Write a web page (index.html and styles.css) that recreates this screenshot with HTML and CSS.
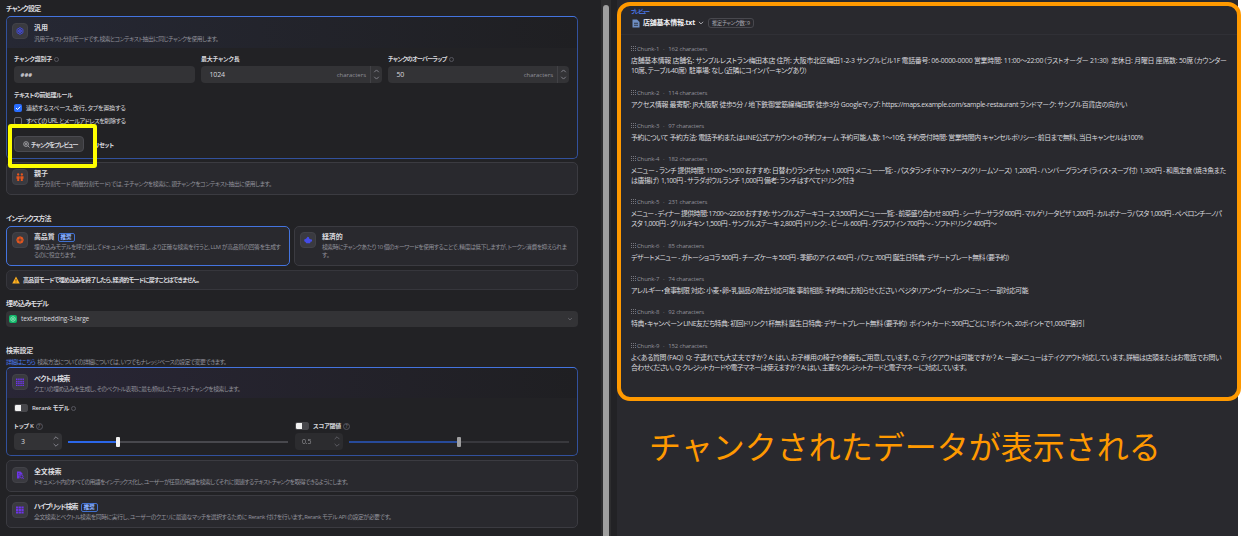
FILE: index.html
```html
<!DOCTYPE html>
<html lang="ja">
<head>
    <meta charset="UTF-8">
    <title>チャンク設定</title>
    <link rel="stylesheet" href="styles.css">
</head>
<body>
    <div class="app">
        <main class="settings">
            <h2 class="t77">チャンク設定</h2>
            <section class="card card-general active">
                <div class="card-head gradient-blue">
                    <div class="icon"><svg viewBox="0 0 16 16" fill="none" stroke="#444ce7" stroke-width="1.8"><path d="M8 1.2l5.900 3.400v6.800L8 14.800l-5.900-3.400V4.600z"/><circle cx="8" cy="8" r="3"/><path d="M8 5v6M5.400 6.500l5.200 3M10.600 6.500l-5.200 3" stroke-width="1"/></svg></div>
                    <div class="card-text">
                        <h3>汎用</h3>
                        <p class="t48">汎用テキスト分割モードです。検索とコンテキスト抽出に同じチャンクを使用します。</p>
                    </div>
                </div>
                <div class="fields">
                    <div class="field">
                        <label><span class="t21">チャンク識別子</span><i class="help"></i></label>
                        <div class="input"><b class="small">###</b></div>
                    </div>
                    <div class="field">
                        <label><span class="t14">最大チャンク長</span></label>
                        <div class="input"><span class="t14">1024</span><em>characters</em><svg class="stepper" viewBox="0 0 12 18"><path d="M3.5 6.500L6 4 8.500 6.500M3.500 11.500L6 14 8.500 11.500"/></svg></div>
                    </div>
                    <div class="field">
                        <label><span class="t68">チャンクのオーバーラップ</span><i class="help"></i></label>
                        <div class="input"><span class="t21">50</span><em>characters</em><svg class="stepper" viewBox="0 0 12 18"><path d="M3.5 6.500L6 4 8.500 6.500M3.500 11.500L6 14 8.500 11.500"/></svg></div>
                    </div>
                </div>
                <div class="rules">
                    <label><span class="t41">テキストの前処理ルール</span></label>
                    <div class="check"><i class="box checked"><svg viewBox="0 0 8 8"><path d="M2 4l1.5 1.5L6.200 2.700"/></svg></i><span class="t28">連続するスペース、改行、タブを置換する</span></div>
                    <div class="check"><i class="box"></i><span class="t53">すべての URL とメールアドレスを削除する</span></div>
                </div>
                <div class="actions">
                    <button class="preview-button"><svg viewBox="0 0 16 16"><circle cx="7" cy="7" r="5.5"/><circle cx="7" cy="7" r="2"/><path d="M11 11l4 4"/></svg><span class="t83">チャンクをプレビュー</span></button>
                    <button class="reset-button"><span class="t25">リセット</span></button>
                    <div class="marker"></div>
                </div>
            </section>
            <section class="card card-parent">
                <div class="card-head">
                    <div class="icon"><svg viewBox="0 0 16 16" fill="#e6561e"><circle cx="4.300" cy="3" r="2.300"/><circle cx="11.700" cy="3" r="2.300"/><path d="M1 6.500h6.300v5H6.300V16H2.500v-4.500H1zM8.700 6.500H15v5h-1.500V16H9.700v-4.500h-1z"/></svg></div>
                    <div class="card-text">
                        <h3>親子</h3>
                        <p class="t41">親子分割モード (階層分割モード) では、子チャンクを検索に、親チャンクをコンテキスト抽出に使用します。</p>
                    </div>
                </div>
            </section>

            <h2 class="index-title t91">インデックス方法</h2>
            <div class="methods">
                <section class="card active">
                    <div class="card-head">
                        <div class="icon"><svg viewBox="0 0 16 16" fill="#e6561e"><path d="M8 .5l5.300 2.200L15.500 8l-2.200 5.300L8 15.500l-5.300-2.200L.5 8l2.200-5.300z"/><path d="M8 3v3M8 10v3M3 8h3M10 8h3" stroke="#3a3a40" stroke-width="1.3"/><circle cx="8" cy="8" r="1.800" fill="#3a3a40"/></svg></div>
                        <div class="card-text">
                            <h3><span class="t14">高品質</span><b class="badge">推奨</b></h3>
                            <p><span class="t34">埋め込みモデルを呼び出してドキュメントを処理し、より正確な検索を行うと、LLM が高品質の回答を生成す</span><br><span class="t45">るのに役立ちます。</span></p>
                        </div>
                    </div>
                </section>
                <section class="card">
                    <div class="card-head">
                        <div class="icon"><svg viewBox="0 0 16 16" fill="#444ce7"><path d="M5 4.500L7 1.500l3 1V5c2 .5 3 1 3.500 2H16v4h-2.500L12 14.500H4.500L3 12 .5 10.500V7L3 6z"/></svg></div>
                        <div class="card-text">
                            <h3><span class="t14">経済的</span></h3>
                            <p><span class="t48">検索時にチャンクあたり 10 個のキーワードを使用することで、精度は低下しますが、トークン消費を抑えられま</span><br>す。</p>
                        </div>
                    </div>
                </section>
            </div>
            <div class="warning"><svg viewBox="0 0 16 16"><path d="M8 1l7.500 14H.5z" fill="#fdb022"/><path d="M8 6v4.500M8 11.500V13" stroke="#5b3a05" stroke-width="1.5"/></svg><span class="t64">高品質モードで埋め込みを終了したら、経済的モードに戻すことはできません。</span></div>

            <h2 class="model-title t83">埋め込みモデル</h2>
            <div class="select"><svg class="model-logo" viewBox="0 0 16 16"><rect width="16" height="16" rx="4" fill="#12b76a"/><path d="M8 3l4.300 2.500v5L8 13l-4.300-2.500v-5zM8 6l2 1v2l-2 1-2-1V7z" fill="none" stroke="#d1fadf" stroke-width="1.1"/></svg><span class="model-name t14">text-embedding-3-large</span><svg class="chevron" viewBox="0 0 10 10"><path d="M2 3.500l3 3 3-3"/></svg></div>

            <h2 class="search-title t25">検索設定</h2>
            <p class="hint"><a href="#" class="t57">詳細はこちら</a><span class="t51">検索方法についての詳細については、いつでもナレッジベースの設定で変更できます。</span></p>
            <section class="card card-vector active">
                <div class="card-head gradient-purple">
                    <div class="icon"><svg viewBox="0 0 16 16" fill="none" stroke="#6d34e8" stroke-width="3" stroke-dasharray="3 1.300"><path d="M0 2.500h16M0 6.800h16M0 11.100h16M0 15.400h16"/></svg></div>
                    <div class="card-text">
                        <h3 class="t73">ベクトル検索</h3>
                        <p class="t48">クエリの埋め込みを生成し、そのベクトル表現に最も類似したテキストチャンクを検索します。</p>
                    </div>
                </div>
                <div class="rerank"><i class="toggle"></i><span class="t21">Rerank モデル</span><i class="help"></i></div>
                <div class="params">
                    <div class="param">
                        <div class="param-label"><span class="t28">トップ K</span><i class="help big">?</i></div>
                        <div class="param-row">
                            <div class="input number"><span>3</span><svg class="stepper" viewBox="0 0 12 18"><path d="M3.5 6.500L6 4 8.500 6.500M3.500 11.500L6 14 8.500 11.500"/></svg></div>
                            <div class="slider"><div class="fill" style="width: 21.8%"></div><div class="handle"></div></div>
                        </div>
                    </div>
                    <div class="param disabled">
                        <div class="param-label"><i class="toggle"></i><span class="t21">スコア閾値</span><i class="help big">?</i></div>
                        <div class="param-row">
                            <div class="input number"><span class="t21">0.5</span><svg class="stepper" viewBox="0 0 12 18"><path d="M3.5 6.500L6 4 8.500 6.500M3.500 11.500L6 14 8.500 11.500"/></svg></div>
                            <div class="slider"><div class="fill" style="width: 49%"></div><div class="handle"></div></div>
                        </div>
                    </div>
                </div>
            </section>
            <section class="card card-search">
                <div class="card-head">
                    <div class="icon"><svg viewBox="0 0 16 16" fill="#6d34e8"><path d="M2 1h7l4 4v2H9.500L7 9.500V15H2z"/><circle cx="11" cy="11" r="3" fill="none" stroke="#6d34e8" stroke-width="1.8"/><path d="M12.500 13L15.500 16" stroke="#6d34e8" stroke-width="2"/><path d="M4 5h3M4 8h3" stroke="#3a3a40"/></svg></div>
                    <div class="card-text">
                        <h3 class="t14">全文検索</h3>
                        <p class="t57">ドキュメント内のすべての用語をインデックス化し、ユーザーが任意の用語を検索してそれに関連するテキストチャンクを取得できるようにします。</p>
                    </div>
                </div>
            </section>
            <section class="card card-search">
                <div class="card-head">
                    <div class="icon"><svg viewBox="0 0 16 16" fill="none" stroke="#6d34e8" stroke-width="3.8" stroke-dasharray="4.500 .9"><path d="M0 3h16M0 8h16M0 13h16"/></svg></div>
                    <div class="card-text">
                        <h3><span class="t97">ハイブリッド検索</span><b class="badge">推奨</b></h3>
                        <p class="t37">全文検索とベクトル検索を同時に実行し、ユーザーのクエリに最適なマッチを選択するために Rerank 付けを行います。Rerank モデル API の設定が必要です。</p>
                    </div>
                </div>
            </section>
        </main>

        <div class="scrollbar"><div class="thumb"></div></div>

        <aside class="preview">
            <header class="preview-head">
                <div class="preview-label">プレビュー</div>
                <div class="preview-file">
                    <svg class="file-icon" viewBox="0 0 16 18"><path d="M1 1h9l5 5v11H1z" fill="#6f8fc4"/><path d="M4 8.500h8M4 12.500h8" stroke="#29292e" stroke-width="1.7"/></svg>
                    <b class="t21">店舗基本情報.txt</b>
                    <svg class="chevron" viewBox="0 0 10 10"><path d="M1.500 3l3.500 3.500L8.500 3"/></svg>
                    <span class="count t28">推定チャンク数：9</span>
                </div>
            </header>
            <div class="chunks">
                <article>
                    <h4><i></i>Chunk-1<u>·</u>162 characters</h4>
                    <p><span class="t23">店舗基本情報 店舗名: サンプルレストラン梅田本店 住所: 大阪市北区梅田1-2-3 サンプルビル1F 電話番号: 06-0000-0000 営業時間: 11:00〜22:00（ラストオーダー 21:30） 定休日: 月曜日 座席数: 50席（カウンター</span><br><span class="t41">10席、テーブル40席） 駐車場: なし（近隣にコインパーキングあり）</span></p>
                </article>
                <article>
                    <h4><i></i>Chunk-2<u>·</u>114 characters</h4>
                    <p class="t28">アクセス情報 最寄駅: JR大阪駅 徒歩5分 / 地下鉄御堂筋線梅田駅 徒歩3分 Googleマップ: https://maps.example.com/sample-restaurant ランドマーク: サンプル百貨店の向かい</p>
                </article>
                <article>
                    <h4><i></i>Chunk-3<u>·</u>97 characters</h4>
                    <p class="t41">予約について 予約方法: 電話予約またはLINE公式アカウントの予約フォーム 予約可能人数: 1〜10名 予約受付時間: 営業時間内 キャンセルポリシー: 前日まで無料、当日キャンセルは100%</p>
                </article>
                <article>
                    <h4><i></i>Chunk-4<u>·</u>182 characters</h4>
                    <p><span class="t41">メニュー - ランチ 提供時間: 11:00〜15:00 おすすめ: 日替わりランチセット 1,000円 メニュー一覧: - パスタランチ（トマトソース/クリームソース） 1,200円 - ハンバーグランチ（ライス・スープ付） 1,300円 - 和風定食（焼き魚また</span><br><span class="t45">は唐揚げ） 1,100円 - サラダボウルランチ 1,000円 備考: ランチはすべてドリンク付き</span></p>
                </article>
                <article>
                    <h4><i></i>Chunk-5<u>·</u>231 characters</h4>
                    <p><span class="t60">メニュー - ディナー 提供時間: 17:00〜22:00 おすすめ: サンプルステーキコース 3,500円 メニュー一覧: - 前菜盛り合わせ 800円 - シーザーサラダ 600円 - マルゲリータピザ 1,200円 - カルボナーラパスタ 1,000円 - ペペロンチーノパ</span><br><span class="t45">スタ 1,000円 - グリルチキン 1,500円 - サンプルステーキ 2,800円 ドリンク: - ビール 600円 - グラスワイン 700円〜 - ソフトドリンク 400円〜</span></p>
                </article>
                <article>
                    <h4><i></i>Chunk-6<u>·</u>85 characters</h4>
                    <p class="t53">デザートメニュー - ガトーショコラ 500円 - チーズケーキ 500円 - 季節のアイス 400円 - パフェ 700円 誕生日特典: デザートプレート無料（要予約）</p>
                </article>
                <article>
                    <h4><i></i>Chunk-7<u>·</u>74 characters</h4>
                    <p class="t48">アレルギー・食事制限 対応: 小麦・卵・乳製品の除去対応可能 事前相談: 予約時にお知らせください ベジタリアン・ヴィーガンメニュー: 一部対応可能</p>
                </article>
                <article>
                    <h4><i></i>Chunk-8<u>·</u>92 characters</h4>
                    <p class="t45">特典・キャンペーン LINE友だち特典: 初回ドリンク1杯無料 誕生日特典: デザートプレート無料（要予約） ポイントカード: 500円ごとに1ポイント、20ポイントで1,000円割引</p>
                </article>
                <article>
                    <h4><i></i>Chunk-9<u>·</u>152 characters</h4>
                    <p><span class="t39">よくある質問（FAQ） Q: 子連れでも大丈夫ですか？ A: はい、お子様用の椅子や食器もご用意しています。 Q: テイクアウトは可能ですか？ A: 一部メニューはテイクアウト対応しています。詳細は店頭またはお電話でお問い</span><br><span class="t68">合わせください。 Q: クレジットカードや電子マネーは使えますか？ A: はい、主要なクレジットカードと電子マネーに対応しています。</span></p>
                </article>
            </div>
            <div class="outline"></div>
            <div class="caption">チャンクされたデータが表示される</div>
        </aside>
    </div>
</body>
</html>
```
FILE: styles.css
```css
* {
    box-sizing: border-box;
}
body {
    margin: 0;
    background: #fff;
    color: #d9d9de;
    font-family: "Open Sans", "Noto Sans CJK JP", sans-serif;
    font-size: 7px;
    font-feature-settings: "palt";
    line-height: 10px;
    white-space: nowrap;
}
h2, h3, h4, p {
    margin: 0;
    font-size: inherit;
    font-weight: normal;
}
i, em, u {
    font-style: normal;
    text-decoration: none;
}
svg {
    display: block;
    flex: none;
}
.app {
    display: flex;
    width: 1238px;
    height: 536px;
    background: #222225;
}
.settings {
    flex: none;
    width: 601px;
    height: 536px;
    padding: 4px 23px 0 6px;
}
h2 {
    height: 12px;
    font-size: 7px;
    font-weight: 600;
}
.card {
    border: 1px solid #3b3b41;
    border-radius: 5px;
    background: #29292e;
}
.card.active {
    border-color: #4474df;
}
.card-head {
    display: flex;
    gap: 6px;
    padding: 6px 5px;
}
.icon {
    display: flex;
    flex: none;
    align-items: center;
    justify-content: center;
    width: 16px;
    height: 16px;
    border: 1px solid #424248;
    border-radius: 4px;
    background: #3a3a40;
}
.icon svg {
    width: 8px;
    height: 8px;
}
h3 {
    display: flex;
    align-items: center;
    height: 10px;
    font-weight: 600;
}
.card-text p {
    padding-top: 1px;
    color: #92929b;
    font-size: 5.8px;
    line-height: 8px;
}
.badge {
    margin-left: 3px;
    padding: 0 2px;
    border: 1px solid #4070d0;
    border-radius: 2px;
    color: #84adff;
    font-size: 5.5px;
    line-height: 7px;
}

/* letter spacing, in hundredths of a pixel */
.t14 { letter-spacing: -0.14px; }
.t21 { letter-spacing: -0.21px; }
.t23 { letter-spacing: -0.23px; }
.t25 { letter-spacing: -0.25px; }
.t28 { letter-spacing: -0.28px; }
.t34 { letter-spacing: -0.34px; }
.t37 { letter-spacing: -0.37px; }
.t39 { letter-spacing: -0.39px; }
.t41 { letter-spacing: -0.41px; }
.t45 { letter-spacing: -0.45px; }
.t48 { letter-spacing: -0.48px; }
.t51 { letter-spacing: -0.51px; }
.t53 { letter-spacing: -0.53px; }
.t57 { letter-spacing: -0.57px; }
.t60 { letter-spacing: -0.6px; }
.t64 { letter-spacing: -0.64px; }
.t68 { letter-spacing: -0.68px; }
.t73 { letter-spacing: -0.73px; }
.t77 { letter-spacing: -0.77px; }
.t83 { letter-spacing: -0.83px; }
.t91 { letter-spacing: -0.91px; }
.t97 { letter-spacing: -0.97px; }

/* general card */
.card-general {
    height: 142.5px;
    background: #222225;
}
.card-general.active, .card-vector.active {
    border-color: #4474df #32519c #32519c;
}
.gradient-blue {
    height: 31px;
    border-radius: 5px 5px 0 0;
    background: linear-gradient(90deg, #262834, #1f1f22);
}
.gradient-blue p {
    padding-top: 2px;
}
.gradient-purple {
    height: 30px;
    border-radius: 5px 5px 0 0;
    background: linear-gradient(90deg, #292636, #1f1f22);
}
.fields {
    display: grid;
    grid-template-columns: 181px 181px 181px;
    gap: 6px;
    padding: 5px 7px 0;
}
label {
    display: flex;
    align-items: center;
    height: 12px;
    font-size: 6px;
    font-weight: 600;
}
.help {
    width: 5px;
    height: 5px;
    margin-left: 2px;
    border: 1px solid #56565e;
    border-radius: 50%;
}
.help.big {
    width: 7px;
    height: 7px;
    color: #77777f;
    font-size: 4.5px;
    line-height: 5px;
    text-align: center;
}
.input {
    display: flex;
    align-items: center;
    height: 17px;
    margin-top: 1px;
    padding-left: 8.5px;
    border-radius: 4px;
    background: #333336;
}
.input .small {
    margin-left: -2px;
    font-size: 6px;
}
.input em {
    margin-left: auto;
    margin-right: 4px;
    color: #92929a;
    font-size: 6px;
}
.stepper {
    width: 12px;
    height: 17px;
    border-left: 1px solid #424246;
}
.stepper path, .chevron path {
    fill: none;
    stroke: #86868e;
}
.rules {
    padding: 6px 7px 0;
}
.check {
    display: flex;
    align-items: center;
    gap: 4px;
    height: 13.5px;
    font-size: 6.2px;
}
.box {
    width: 8px;
    height: 8px;
    border: 1px solid #66666e;
    border-radius: 2px;
}
.box.checked {
    border: 0;
    background: #296dff;
}
.box path {
    fill: none;
    stroke: #fff;
}
.actions {
    position: relative;
    display: flex;
    gap: 4px;
    padding: 8px 7px 0;
}
button {
    display: flex;
    align-items: center;
    gap: 1px;
    height: 16px;
    padding: 0 8px;
    border: 0;
    background: none;
    color: #d9d9de;
    font: 600 6px "Open Sans", "Noto Sans CJK JP", sans-serif;
    font-feature-settings: "palt";
}
.preview-button {
    width: 70px;
    border: 1px solid #4a4a50;
    border-radius: 4px;
    background: #3a3a3d;
}
.preview-button svg {
    width: 7px;
    height: 7px;
    fill: none;
    stroke: #c8c8cc;
    stroke-width: 1.5;
}
.reset-button {
    padding: 0 6px;
}
/* highlight drawn over the preview button */
.marker {
    position: absolute;
    left: 0.5px;
    top: -4px;
    width: 89.5px;
    height: 43.5px;
    border: 4.5px solid #ff0;
    border-radius: 3px;
}
.card-parent {
    height: 33px;
    margin-top: 3.5px;
}

/* index method */
.index-title {
    margin-top: 19px;
}
.methods {
    display: grid;
    grid-template-columns: 284px 284px;
    gap: 4px;
}
.methods .card {
    height: 40px;
}
.methods .card-head {
    padding-top: 5px;
}
.warning {
    display: flex;
    align-items: center;
    gap: 3px;
    height: 20px;
    margin-top: 4px;
    padding-left: 5px;
    border: 1px solid #36363c;
    border-radius: 5px;
    background: #29292e;
    font-size: 6px;
    font-weight: 600;
}
.warning svg {
    width: 8px;
    height: 8px;
}
.model-title {
    margin-top: 9px;
}
.select {
    display: flex;
    align-items: center;
    gap: 4px;
    height: 16px;
    padding: 0 5px 0 3px;
    border-radius: 4px;
    background: #333336;
}
.model-logo {
    width: 8px;
    height: 8px;
}
.model-name {
    font-size: 6.5px;
}
.chevron {
    width: 6px;
    height: 6px;
}
.select .chevron {
    margin-left: auto;
}

/* search settings */
.search-title {
    height: 11px;
    margin-top: 19px;
}
.hint {
    display: flex;
    gap: 2px;
    height: 10px;
    color: #92929b;
    font-size: 5.8px;
}
.hint a {
    color: #4b7cf3;
    text-decoration: none;
}
.card-vector {
    height: 89px;
    background: #222225;
}
.rerank {
    display: flex;
    align-items: center;
    height: 10px;
    margin-top: 5px;
    padding-left: 7px;
    font-size: 6px;
    font-weight: 600;
}
.toggle {
    width: 14px;
    height: 8px;
    margin-right: 4px;
    border: 1px solid #47474b;
    border-radius: 2px;
    background: linear-gradient(90deg, #f2f2f2 50%, #47474b 50%);
}
.params {
    display: grid;
    grid-template-columns: 274px 274px;
    gap: 7px;
    padding: 8px 7px 0;
}
.param-label {
    display: flex;
    align-items: center;
    height: 10px;
    font-size: 6px;
    font-weight: 600;
}
.param-row {
    display: flex;
    align-items: center;
    gap: 6px;
    margin-top: 2px;
}
.number {
    width: 48px;
    margin-top: 0;
    padding-left: 7px;
}
.number .stepper {
    margin-left: auto;
    border-left: 0;
}
.slider {
    display: flex;
    flex: 1;
    align-items: center;
    height: 10px;
    background: linear-gradient(#48484d, #48484d) center / 100% 2px no-repeat;
}
.fill {
    height: 2px;
    background: #2b66e8;
}
.handle {
    width: 4px;
    height: 10px;
    border-radius: 1px;
    background: #f2f2f2;
}
.disabled .number, .disabled .slider {
    opacity: 0.6;
}
.card-search {
    height: 32.5px;
    margin-top: 3.5px;
}
.card-search + .card-search {
    margin-top: 3px;
}

.scrollbar {
    flex: none;
    width: 10px;
    padding: 5px 2px 0;
    background: #2d2d2f;
}
.thumb {
    height: 531px;
    border-radius: 3px 3px 0 0;
    background: #9f9f9f;
}

/* preview */
.preview {
    position: relative;
    flex: none;
    width: 621px;
    margin-left: 6px;
    background: #29292e;
}
.preview-head {
    height: 35px;
    padding: 7px 14px 0;
    border-bottom: 1px solid #303036;
}
.preview-label {
    height: 9px;
    color: #4b7cf3;
    font-size: 5px;
    font-weight: 600;
    letter-spacing: -1px;
    line-height: 9px;
}
.preview-file {
    display: flex;
    align-items: center;
    height: 14px;
}
.preview-file b {
    color: #f0f0f2;
}
.file-icon {
    width: 8px;
    height: 9px;
    margin: 0 3px 0 1px;
}
.preview .chevron {
    margin: 0 4px 0 3px;
}
.preview .chevron path {
    stroke: #d0d0d6;
    stroke-width: 1.3;
}
.count {
    height: 10px;
    padding: 0 3px;
    border: 1px solid #48484e;
    border-radius: 3px;
    color: #a8a8b0;
    font-size: 5.3px;
    line-height: 8px;
}
.chunks {
    display: flex;
    flex-direction: column;
    gap: 11.3px;
    padding: 9.3px 14px 0;
    font-size: 6.9px;
}
h4 {
    display: flex;
    align-items: center;
    height: 10px;
    margin-bottom: 2px;
    color: #92929b;
    font-size: 6px;
    letter-spacing: -0.16px;
}
h4 i {
    width: 5px;
    height: 6px;
    margin-right: 1px;
    background: linear-gradient(90deg, #77777f 50%, transparent 50%) 0 0 / 2px 2px;
    border-top: 0;
    mask: linear-gradient(#000 50%, transparent 50%) 0 0 / 2px 2px;
}
h4 u {
    width: 9px;
    text-align: center;
}
.outline {
    position: absolute;
    left: -0.5px;
    top: 2px;
    width: 624px;
    height: 398.5px;
    border: 4.5px solid #ff9900;
    border-radius: 13px;
}
.caption {
    position: absolute;
    left: 32px;
    top: 422px;
    color: #ff9900;
    font: 32px/46px "Noto Sans CJK JP", sans-serif;
    font-feature-settings: normal;
}
```
